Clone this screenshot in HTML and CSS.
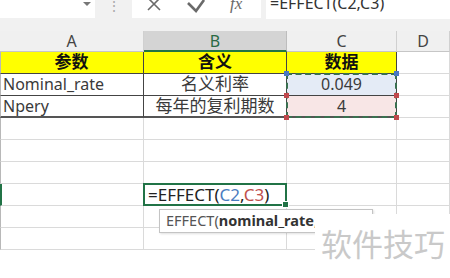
FILE: index.html
```html
<!DOCTYPE html>
<html lang="zh-CN">
<head>
    <meta charset="UTF-8">
    <title>EFFECT</title>
    <link rel="stylesheet" href="styles.css">
</head>
<body>

    <div class="top">
        <div class="toolbar">
            <div class="namebox"><span class="caret"></span></div>
            <div class="grip">&#8942;</div>
            <div class="fxbox">
                <svg class="ico-x" width="16" height="18" viewBox="0 0 16 18">
                    <path d="M2 -2 L14 10 M14 -2 L2 10" stroke="#6a6a6a" stroke-width="1.6" fill="none"/>
                </svg>
                <svg class="ico-ok" width="20" height="18" viewBox="0 0 20 18">
                    <path d="M2 3 L10 11 L18 0" stroke="#6a6a6a" stroke-width="2.6" fill="none"/>
                </svg>
                <span class="ico-fx">fx</span>
            </div>
            <div class="formula"><span>=EFFECT(C2,C3)</span></div>
        </div>
    </div>

    <div class="sheet">
        <!-- column headers -->
        <div class="hd">A</div>
        <div class="hd hd-sel">B</div>
        <div class="hd">C</div>
        <div class="hd">D</div>

        <!-- row 1 -->
        <div class="c first tb yel center cjk bold">参数</div>
        <div class="c tb yel center cjk bold">含义</div>
        <div class="c tb yel center cjk bold">数据</div>
        <div class="c"></div>

        <!-- row 2 -->
        <div class="c first tb">Nominal_rate</div>
        <div class="c tb center cjk">名义利率</div>
        <div class="c tb center ref-blue">
            0.049
            <div class="copy-range">
                <i class="sq sq-blue tl"></i><i class="sq sq-blue tr"></i>
                <i class="sq sq-red ml"></i><i class="sq sq-red mr"></i>
                <i class="sq sq-red bl"></i><i class="sq sq-red br"></i>
            </div>
        </div>
        <div class="c"></div>

        <!-- row 3 -->
        <div class="c first tb last">Npery</div>
        <div class="c tb last center cjk">每年的复利期数</div>
        <div class="c tb last center ref-red">4</div>
        <div class="c"></div>

        <!-- rows 4-6 -->
        <div class="c first"></div><div class="c"></div><div class="c"></div><div class="c"></div>
        <div class="c first"></div><div class="c"></div><div class="c"></div><div class="c"></div>
        <div class="c first"></div><div class="c"></div><div class="c"></div><div class="c"></div>

        <!-- row 7 -->
        <div class="c first row-active"></div>
        <div class="c active">
            <span>=EFFECT(<span class="r1">C2</span>,<span class="r2">C3</span>)</span>
            <i class="handle"></i>
            <div class="tip">EFFECT(<b>nominal_rate</b>, npery)</div>
        </div>
        <div class="c"></div><div class="c"></div>

        <!-- rows 8-9 -->
        <div class="c first"></div><div class="c"></div><div class="c"></div><div class="c"></div>
        <div class="c first"></div><div class="c"></div><div class="c"></div><div class="c"></div>
    </div>

    <div class="watermark">软件技巧</div>

</body>
</html>
```

FILE: styles.css
```css
body {
    margin: 0;
    width: 450px;
    height: 278px;
    overflow: hidden;
    position: relative;
    background-color: #fff;
    font-family: "Noto Sans", "Noto Sans CJK SC", sans-serif;
    color: #333;
}

.top {
    background-color: #f1f1f1;
    padding-bottom: 13px;
}

.toolbar {
    display: flex;
    height: 18px;
}

.namebox {
    width: 95px;
    background-color: #fff;
    position: relative;
}

.caret {
    position: absolute;
    left: 83px;
    top: 2px;
    border-left: 4px solid transparent;
    border-right: 4px solid transparent;
    border-top: 4px solid #777;
}

.grip {
    width: 37px;
    text-align: center;
    font-size: 14px;
    line-height: 12px;
    color: #aaa;
}

.fxbox {
    width: 129px;
    background-color: #fff;
    display: flex;
    align-items: flex-start;
}

.ico-x {
    margin-left: 14px;
}

.ico-ok {
    margin-left: 24px;
}

.ico-fx {
    margin-left: 24px;
    margin-top: -4px;
    font-family: "Liberation Serif", serif;
    font-style: italic;
    font-size: 17px;
    line-height: 16px;
    color: #6a6a6a;
}

.formula {
    flex: 1;
    margin-left: 5px;
    background-color: #fff;
    height: 19px;
    overflow: hidden;
}

.formula span {
    display: block;
    margin: -5px 0 0 4px;
    font-size: 16px;
    line-height: 16px;
    color: #333;
}

/* sheet grid */
.sheet {
    display: grid;
    grid-template-columns: 144px 143px 110px 53px;
    grid-auto-rows: 22px;
    grid-template-rows: 21px;
}

.hd {
    box-sizing: border-box;
    background-color: #f0f0f0;
    border-right: 1px solid #d0d0d0;
    border-bottom: 1px solid #c6c6c6;
    text-align: center;
    font-size: 16px;
    line-height: 21px;
    color: #444;
}

.hd-sel {
    background-color: #d4d4d4;
    color: #2a6a44;
    border-bottom: 2px solid #217346;
    border-right-color: #bdbdbd;
}

.c {
    box-sizing: border-box;
    border-right: 1px solid #dadada;
    border-bottom: 1px solid #dadada;
    font-size: 16px;
    line-height: 20px;
    padding: 0 3px;
    white-space: nowrap;
    position: relative;
    color: #3a3a3a;
}

.first {
    border-left: 1px solid #b8b8b8;
    padding-left: 2px;
}

.row-active {
    border-left: 2px solid #217346;
}

.tb {
    border-right-color: #444;
    border-bottom-color: #444;
}

.last {
    border-bottom: 2px solid #555;
}

.yel {
    background-color: #ffff00;
    color: #111;
}

.center {
    text-align: center;
}

.cjk {
    font-size: 17px;
}

.bold {
    font-weight: bold;
}

.ref-blue {
    background-color: #e4ebf6;
}

.ref-red {
    background-color: #f8e6e6;
}

.copy-range {
    position: absolute;
    left: -1px;
    top: -1px;
    width: 111px;
    height: 45px;
    box-sizing: border-box;
    border: 2px dashed #3a7050;
    z-index: 3;
}

.sq {
    position: absolute;
    width: 5px;
    height: 5px;
}

.sq-blue {
    background-color: #4a78c2;
}

.sq-red {
    background-color: #c0484d;
}

.tl { left: -4px; top: -4px; }
.tr { right: -4px; top: -4px; }
.ml { left: -4px; top: 18px; }
.mr { right: -4px; top: 18px; }
.bl { left: -4px; bottom: -4px; }
.br { right: -4px; bottom: -4px; }

.active {
    border: 2px solid #217346;
    margin: -1px 0 0 -1px;
    padding-left: 3px;
    font-size: 17px;
    line-height: 19px;
    color: #222;
    overflow: visible;
    z-index: 2;
}

.r1 {
    color: #4a7cc0;
}

.r2 {
    color: #c0504d;
}

.handle {
    position: absolute;
    right: -4px;
    bottom: -4px;
    width: 5px;
    height: 5px;
    background-color: #217346;
    border: 1px solid #fff;
}

.tip {
    position: absolute;
    left: 14px;
    top: 24px;
    width: 214px;
    height: 24px;
    box-sizing: border-box;
    background-color: #fff;
    border: 1px solid #c4c4c4;
    box-shadow: 1px 1px 2px rgba(0, 0, 0, 0.12);
    padding-left: 6px;
    font-size: 14.5px;
    line-height: 21px;
    color: #555;
    overflow: hidden;
}

.tip b {
    font-weight: bold;
    color: #333;
}

.watermark {
    position: absolute;
    right: 0;
    bottom: 0;
    width: 135px;
    height: 64px;
    padding: 11px 0 0 6px;
    box-sizing: border-box;
    background-color: #fff;
    color: #c9c9c9;
    font-size: 31px;
    line-height: 36px;
    font-family: "Noto Sans CJK SC", sans-serif;
    z-index: 5;
}
```
